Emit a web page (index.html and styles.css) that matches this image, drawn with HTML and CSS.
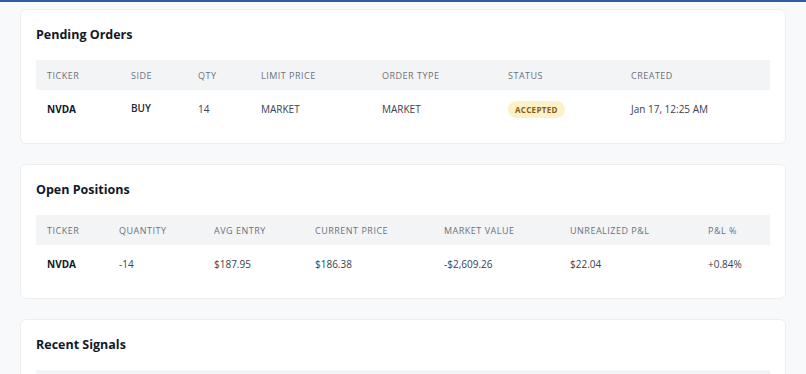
FILE: index.html
```html
<!DOCTYPE html>
<html>
<head>
<meta charset="utf-8">
<link rel="stylesheet" href="styles.css">
</head>
<body>
<div class="page">
  <section class="card">
    <h2 class="card-title">Pending Orders</h2>
    <table class="tbl orders">
      <thead>
        <tr><th>Ticker</th><th>Side</th><th>Qty</th><th>Limit Price</th><th>Order Type</th><th>Status</th><th>Created</th></tr>
      </thead>
      <tbody>
        <tr><td class="tk">NVDA</td><td><span class="side">BUY</span></td><td>14</td><td>MARKET</td><td>MARKET</td><td><span class="badge">ACCEPTED</span></td><td>Jan 17, 12:25 AM</td></tr>
      </tbody>
    </table>
  </section>
  <section class="card">
    <h2 class="card-title">Open Positions</h2>
    <table class="tbl positions">
      <thead>
        <tr><th>Ticker</th><th>Quantity</th><th>Avg Entry</th><th>Current Price</th><th>Market Value</th><th>Unrealized P&amp;L</th><th>P&amp;L %</th></tr>
      </thead>
      <tbody>
        <tr><td class="tk">NVDA</td><td>-14</td><td>$187.95</td><td>$186.38</td><td>-$2,609.26</td><td>$22.04</td><td>+0.84%</td></tr>
      </tbody>
    </table>
  </section>
  <section class="card">
    <h2 class="card-title">Recent Signals</h2>
    <div class="tbl-head-strip"></div>
  </section>
</div>
</body>
</html>
```

FILE: styles.css
```css
* { box-sizing: border-box; }
html, body { margin: 0; padding: 0; }
body {
  background: #f8f9fb;
  font-family: "Open Sans", "Noto Sans", sans-serif;
  color: #1f2937;
  border-top: 2px solid #2d5fa8;
  overflow: hidden;
  height: 374px;
}
.page {
  padding: 7px 20px 0 20px;
  display: flex;
  flex-direction: column;
  gap: 20px;
}
.card {
  background: #fff;
  border: 1px solid #eceef2;
  border-radius: 6px;
  padding: 15px 15px 15px 15px;
}
.card-title {
  margin: 0 0 15px 0;
  font-size: 12.5px;
  line-height: 20px;
  font-weight: 700;
  color: #111827;
}
.tbl {
  width: 100%;
  border-collapse: collapse;
  table-layout: fixed;
}
.tbl th {
  background: #f3f4f6;
  height: 30px;
  padding: 0 11px;
  text-align: left;
  font-size: 9px;
  font-weight: 400;
  letter-spacing: 0.5px;
  text-transform: uppercase;
  color: #6b7280;
}
.tbl td {
  height: 38px;
  padding: 0 11px;
  font-size: 10px;
  color: #374151;
}
.tbl td.tk { font-weight: 700; color: #111827; }
.side { font-weight: 600; color: #1f2937; position: relative; top: -1px; }
.badge {
  display: inline-block;
  background: #fdf1c7;
  color: #8a5a14;
  font-size: 8px;
  font-weight: 700;
  letter-spacing: 0.3px;
  padding: 3px 7px;
  border-radius: 9px;
  line-height: 11px;
}
.tbl-head-strip {
  height: 30px;
  background: #f3f4f6;
}
.orders th:nth-child(1) { width: 84px; }
.orders th:nth-child(2) { width: 67px; }
.orders th:nth-child(3) { width: 63px; }
.orders th:nth-child(4) { width: 121px; }
.orders th:nth-child(5) { width: 126px; }
.orders th:nth-child(6) { width: 123px; }
.positions th:nth-child(1) { width: 72px; }
.positions th:nth-child(2) { width: 95px; }
.positions th:nth-child(3) { width: 101px; }
.positions th:nth-child(4) { width: 129px; }
.positions th:nth-child(5) { width: 126px; }
.positions th:nth-child(6) { width: 138px; }
```
